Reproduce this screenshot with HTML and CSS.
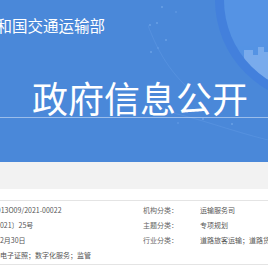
FILE: index.html
```html
<!DOCTYPE html>
<html lang="zh-CN">
<head>
    <meta charset="UTF-8">
    <meta name="viewport" content="width=device-width, initial-scale=1.0">
    <title>政府信息公开</title>
    <link rel="stylesheet" href="styles.css">
</head>
<body>
    <div class="banner">
        <svg class="deco" width="120" height="140" viewBox="0 0 120 140">
            <defs>
                <clipPath id="inner">
                    <circle cx="170" cy="0" r="94"></circle>
                </clipPath>
            </defs>
            <circle cx="170" cy="0" r="103" fill="#4380dc"></circle>
            <circle cx="170" cy="0" r="94" fill="#5593e4"></circle>
            <g clip-path="url(#inner)" fill="#86b3ef" opacity="0.75">
                <rect x="78" y="46" width="6" height="40"></rect>
                <rect x="84" y="52" width="4" height="40"></rect>
                <rect x="88" y="58" width="8" height="40"></rect>
                <rect x="96" y="50" width="9" height="40"></rect>
                <rect x="105" y="55" width="5" height="40"></rect>
                <rect x="110" y="47" width="6" height="40"></rect>
                <rect x="116" y="52" width="6" height="40"></rect>
            </g>
            <g fill="#7fb0ee" opacity="0.6">
                <circle cx="14" cy="7" r="1"></circle>
                <circle cx="9" cy="23" r="1"></circle>
                <circle cx="2" cy="25" r="1"></circle>
                <circle cx="18" cy="40" r="1"></circle>
                <circle cx="3" cy="52" r="1"></circle>
                <circle cx="28" cy="12" r="0.8"></circle>
                <circle cx="10" cy="48" r="0.8"></circle>
                <circle cx="55" cy="119" r="1"></circle>
                <circle cx="84" cy="124" r="1"></circle>
                <circle cx="30" cy="123" r="0.8"></circle>
            </g>
            <path d="M-8 4 C 2 30, 10 60, 40 88" stroke="#6fa3ea" stroke-width="0.6" fill="none" opacity="0.5"></path>
            <path d="M20 112 C 50 118, 80 130, 120 140" stroke="#6fa3ea" stroke-width="0.6" fill="none" opacity="0.5"></path>
        </svg>
        <div class="ministry">中华人民共和国交通运输部</div>
        <h1 class="title">政府信息公开</h1>
        <div class="rule"></div>
    </div>

    <div class="tabbar"></div>

    <div class="meta">
        <div class="meta-label">索 引 号：</div>
        <div class="meta-value">00013O09/2021-00022</div>
        <div class="meta-label">机构分类：</div>
        <div class="meta-value">运输服务司</div>

        <div class="meta-label">发文字号：</div>
        <div class="meta-value">〔2021〕25号</div>
        <div class="meta-label">主题分类：</div>
        <div class="meta-value">专项规划</div>

        <div class="meta-label">成文日期：</div>
        <div class="meta-value">年12月30日</div>
        <div class="meta-label">行业分类：</div>
        <div class="meta-value">道路旅客运输；道路货物运输</div>

        <div class="meta-label">主 题 词：</div>
        <div class="meta-value">1；电子证照；数字化服务；监管</div>
        <div class="meta-label"></div>
        <div class="meta-value"></div>
    </div>
</body>
</html>
```

FILE: styles.css
```css
body {
    margin: 0;
    padding: 0;
    background-color: #fff;
    font-family: "Noto Sans CJK SC", "Noto Sans", sans-serif;
    overflow: hidden;
}

.banner {
    position: relative;
    height: 162px;
    background-color: #4a88d9;
    overflow: hidden;
    white-space: nowrap;
}

.deco {
    position: absolute;
    top: 0;
    right: 0;
}

.ministry {
    position: relative;
    padding-top: 17px;
    margin-left: -81px;
    font-size: 15.5px;
    line-height: 16px;
    color: #fff;
}

.title {
    position: relative;
    margin: 46px 0 0 0;
    padding-left: 32px;
    font-size: 36px;
    line-height: 36px;
    font-weight: normal;
    color: #fff;
}

.rule {
    position: relative;
    margin-top: 2px;
    height: 1px;
    background-color: rgba(255, 255, 255, 0.45);
}

.tabbar {
    height: 27px;
    background-color: #f2f2f2;
    margin-bottom: 11px;
}

.meta {
    display: grid;
    grid-template-columns: 58px 154px 57px 1fr;
    width: 400px;
    margin-left: -69px;
    padding: 2px 0 1px 0;
    border-top: 1px solid #e4e4e4;
    border-bottom: 1px solid #e4e4e4;
    font-size: 7px;
    line-height: 15px;
    white-space: nowrap;
}

.meta-label {
    color: #666;
}

.meta-value {
    color: #555;
    overflow: hidden;
}
```
